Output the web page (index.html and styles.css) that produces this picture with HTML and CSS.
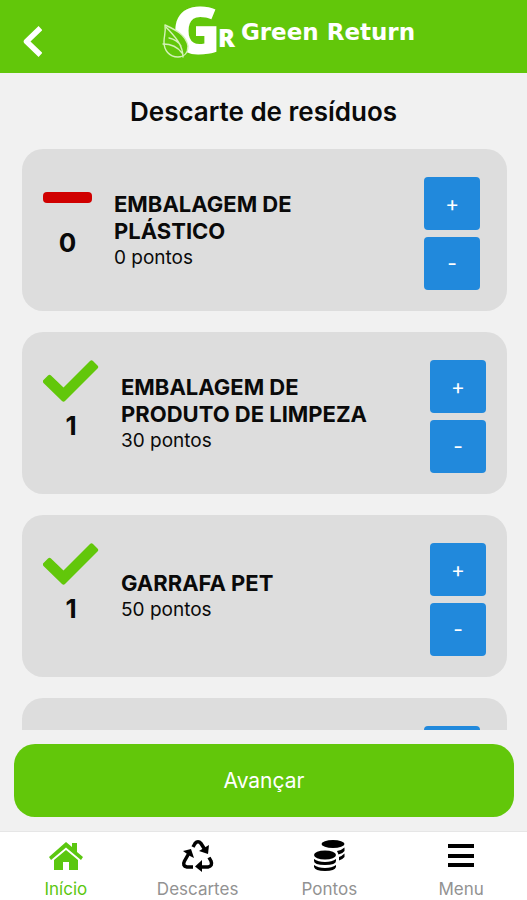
FILE: index.html
```html
<!DOCTYPE html>
<html lang="pt-BR">
<head>
<meta charset="utf-8">
<meta name="viewport" content="width=device-width, initial-scale=1">
<title>Green Return</title>
<link rel="stylesheet" href="styles.css">
</head>
<body>
<header class="topbar">
  <button class="back" type="button" aria-label="Voltar">
    <svg width="20" height="32" viewBox="0 0 20 32"><path d="M16.500 4 4.500 15.500 16.500 27" fill="none" stroke="#fff" stroke-width="5.500" stroke-linecap="square" stroke-linejoin="round"/></svg>
  </button>
  <div class="brand">
    <svg class="logo" width="76" height="56" viewBox="0 0 76 56">
      <text class="logo-g" x="10" y="50">G</text>
      <text class="logo-r" x="56" y="43">R</text>
      <g fill="#62c70a" stroke="#d5f2b8" stroke-width="1.400" stroke-linejoin="round" stroke-linecap="round">
        <path d="M3 21C14 26 24 31 26 42c0 7-4 11-10 11C7 53 2 46 2 38c0-7 2-9 1-17Z"/>
        <path d="M4 23c8 9 17 17 17 30M1 40c7 0 14 2 19 9M7 34c5 1 9 3 12 8" fill="none"/>
      </g>
    </svg>
    <span class="brand-name">Green Return</span>
  </div>
</header>

<main class="content">
  <h1 class="title">Descarte de resíduos</h1>
  <ul class="list">
    <li class="card">
      <div class="status">
        <svg width="49" height="58" viewBox="0 0 49 58" aria-hidden="true"><rect y="22" width="49" height="11" rx="4" fill="#d00000"/></svg>
        <span class="count">0</span>
      </div>
      <div class="info"><h2 class="name">EMBALAGEM DE PLÁSTICO</h2><p class="points">0 pontos</p></div>
      <div class="stepper"><button class="step" type="button">+</button><button class="step" type="button">-</button></div>
    </li>
    <li class="card">
      <div class="status">
        <svg width="56" height="58" viewBox="0 0 56 58" aria-hidden="true"><path d="M.5 27 5 22.500Q6.500 21 8 22.500L20.500 34.500 47 8Q48.500 6.500 50 8l4.500 4.500q1.500 1.500 0 3L22 48q-1.500 1.500-3 0L.5 30q-1.500-1.500 0-3Z" fill="#62c70a"/></svg>
        <span class="count">1</span>
      </div>
      <div class="info"><h2 class="name">EMBALAGEM DE PRODUTO DE LIMPEZA</h2><p class="points">30 pontos</p></div>
      <div class="stepper"><button class="step" type="button">+</button><button class="step" type="button">-</button></div>
    </li>
    <li class="card">
      <div class="status">
        <svg width="56" height="58" viewBox="0 0 56 58" aria-hidden="true"><path d="M.5 27 5 22.500Q6.500 21 8 22.500L20.500 34.500 47 8Q48.500 6.500 50 8l4.500 4.500q1.500 1.500 0 3L22 48q-1.500 1.500-3 0L.5 30q-1.500-1.500 0-3Z" fill="#62c70a"/></svg>
        <span class="count">1</span>
      </div>
      <div class="info"><h2 class="name">GARRAFA PET</h2><p class="points">50 pontos</p></div>
      <div class="stepper"><button class="step" type="button">+</button><button class="step" type="button">-</button></div>
    </li>
    <li class="card">
      <div class="status">
        <svg width="49" height="58" viewBox="0 0 49 58" aria-hidden="true"><rect y="22" width="49" height="11" rx="4" fill="#d00000"/></svg>
      </div>
      <div class="info"></div>
      <div class="stepper"><button class="step" type="button" aria-label="Adicionar"></button><button class="step" type="button" aria-label="Remover"></button></div>
    </li>
  </ul>
  <button class="next" type="button">Avançar</button>
</main>

<nav class="tabs">
  <a class="tab tab-active" href="#inicio">
    <svg width="34" height="32" viewBox="0 0 34 32" fill="currentColor"><path d="M17 2 23 7V3h5v9l6 5-2 3L17 7.500 2 20l-2-3Z"/><path d="M17 10 29 20v10h-9v-8h-6v8H5V20Z"/></svg>
    <span>Início</span>
  </a>
  <a class="tab" href="#descartes">
    <svg class="icon" width="34" height="32" viewBox="0 0 34 32" fill="none" stroke="currentColor" stroke-width="3.500" stroke-linejoin="round"><path d="M12 7 14 3.500Q17 0 20 3.500L23.500 9"/><path d="M28 17.500 30 21q2 5-3 6H19"/><path d="M12 27H6q-5-1-2.500-6L7.500 14"/><g fill="currentColor" stroke="none"><path d="m28 5-1 9-9-3Z"/><path d="M21 20v12l-7-5.500Z"/><path d="m2 11 8-2 3 9-4-2Z"/></g></svg>
    <span>Descartes</span>
  </a>
  <a class="tab" href="#pontos">
    <svg class="icon" width="34" height="32" viewBox="0 0 34 32" fill="currentColor"><ellipse cx="21" cy="4" rx="11.500" ry="4"/><path d="M25 11q5-1 7.500-3.500V11q-2 3-6 3.500ZM27 17q3-1 5.500-3.500V17q-2 2.500-5.500 3.500Z"/><ellipse cx="13" cy="15" rx="11" ry="4.500"/><path d="M2 19q4 3 11 3t11-3v2q0 4-11 4T2 21Z"/><path d="M2 25q4 3 11 3t11-3v2q-1 4-11 4T2 27Z"/></svg>
    <span>Pontos</span>
  </a>
  <a class="tab" href="#menu">
    <svg class="icon" width="34" height="32" viewBox="0 0 34 32" fill="currentColor"><path d="M4 4h26v4H4zM4 14h26v4H4zM4 23h26v4H4z"/></svg>
    <span>Menu</span>
  </a>
</nav>
</body>
</html>
```
FILE: styles.css
```css
* {
  box-sizing: border-box;
}

body {
  margin: 0;
  height: 100vh;
  display: flex;
  flex-direction: column;
  background: #f1f1f1;
  color: #0a0a0a;
  font-family: Inter, "Liberation Sans", sans-serif;
}

h1, h2, p, ul {
  margin: 0;
  padding: 0;
}

button {
  border: 0;
  padding: 0;
  color: #fff;
  font-family: inherit;
}

svg {
  display: block;
}

.topbar {
  flex: none;
  height: 73px;
  display: grid;
  grid-template-columns: 50px 1fr;
  background: #62c70a;
}

.back {
  align-self: start;
  margin: 26px 0 0 22px;
  width: 20px;
  background: none;
}

.brand {
  display: flex;
  justify-content: center;
  align-items: flex-start;
  gap: 3px;
  padding: 4px 0 0;
}

.logo {
  overflow: visible;
  fill: #fff;
  font-family: "Open Sans", sans-serif;
  font-weight: 800;
}

.logo-g {
  font-size: 66px;
}

.logo-r {
  font-size: 25px;
}

.brand-name {
  color: #fff;
  font: 700 23px/56px "DejaVu Sans", sans-serif;
}

.content {
  flex: 1;
  min-height: 0;
  display: flex;
  flex-direction: column;
}

.title {
  flex: none;
  padding: 23px 0 21px;
  text-align: center;
  font-size: 26px;
  line-height: 32px;
  font-weight: 600;
}

.list {
  flex: 1;
  min-height: 0;
  overflow-y: auto;
  scrollbar-width: none;
  display: flex;
  flex-direction: column;
  gap: 21px;
  padding: 0 20px 0 22px;
  list-style: none;
}

.card {
  flex: none;
  display: flex;
  align-items: center;
  padding: 21px;
  border-radius: 21px;
  background: #dddddd;
}

.status {
  align-self: flex-start;
  margin-right: 22px;
}

.count {
  display: block;
  text-align: center;
  font-size: 26px;
  line-height: 30px;
  font-weight: 700;
}

.info {
  width: 70%;
}

.name {
  max-width: 264px;
  font-size: 22px;
  line-height: 27px;
  font-weight: 700;
}

.points {
  font-size: 19px;
  line-height: 25px;
}

.stepper {
  flex: none;
}

.step {
  display: block;
  width: 56px;
  height: 53px;
  margin-top: 7px;
  border-radius: 4px;
  background: #2189dc;
  font-size: 21px;
}

.next {
  flex: none;
  height: 73px;
  margin: 14px 13px 14px 14px;
  border-radius: 21px;
  background: #62c70a;
  font-size: 21px;
}

.tabs {
  flex: none;
  display: grid;
  grid-template-columns: repeat(4, 1fr);
  padding: 8px 0 0;
  height: 69px;
  border-top: 1px solid #e6e6e6;
  background: #fff;
}

.tab {
  display: flex;
  flex-direction: column;
  align-items: center;
  gap: 7px;
  color: #929292;
  font-size: 17px;
  line-height: 20px;
  text-decoration: none;
}

.tab-active {
  color: #5bc710;
}

.icon {
  color: #000;
}
```
